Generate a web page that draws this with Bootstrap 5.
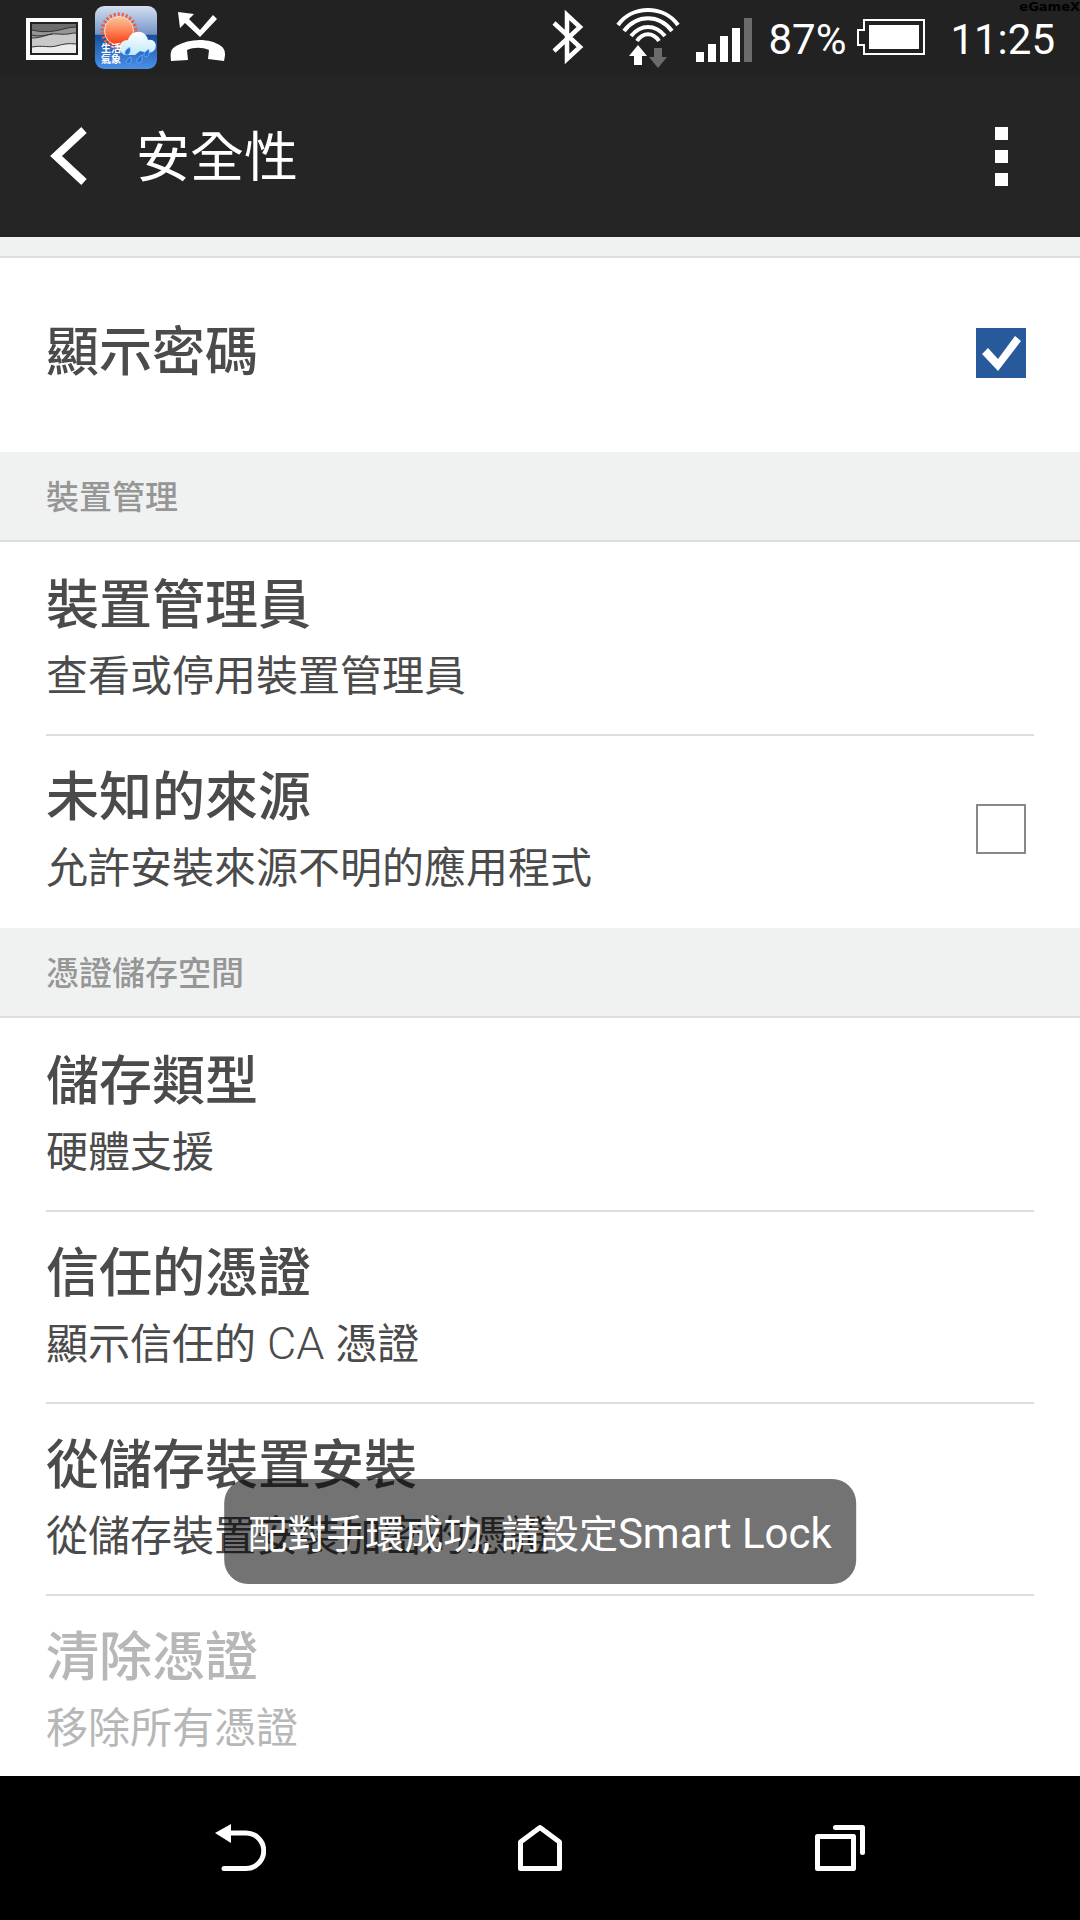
<!DOCTYPE html>
<html lang="zh-Hant">
<head>
<meta charset="utf-8">
<meta name="viewport" content="width=device-width, initial-scale=1">
<title>安全性</title>
<link href="https://cdn.jsdelivr.net/npm/bootstrap@5.3.0/dist/css/bootstrap.min.css" rel="stylesheet">
<style>
body{font-family:Roboto,"Noto Sans CJK TC",sans-serif;color:#4b4b4b}
.status-bar{height:75px;background:#222;font-size:42px;line-height:50px;padding:0 25px}
.status-text{padding-top:4px}
.watermark{top:0;right:0;font:bold 13px/14px "DejaVu Sans",sans-serif;color:#000}
.app-bar{height:162px;background:#252525;padding:0 46px}
.app-title{font-size:54px;line-height:80px;font-weight:400;padding-top:6px;margin-left:46px}
.icon-btn{background:none;border:0;padding:0;line-height:0;color:#fff}
.strip{height:21px;background:#f0f2f1;border-bottom:2px solid #ddd}
.group-title{height:90px;background:#f0f2f1;border-bottom:2px solid #ddd;color:#969696;font-size:33px;line-height:84px;font-weight:500;padding:4px 46px 0}
.settings{padding:0 46px 2px}
.settings .list-group-item{border:0;border-top:2px solid #ddd;padding:22px 0 26px;min-height:192px;color:inherit;background:none}
.settings .list-group-item:first-child{border-top-color:transparent}
.item-title{font-size:53px;line-height:80px;font-weight:500}
.item-note{font-size:42px;line-height:62px}
.latin{font-size:45px;line-height:40px;font-weight:300}
.settings .list-group-item.off{color:#b7b7b7}
.settings .form-check-input{width:50px;height:50px;margin:0 8px 0 0;border:2px solid #888;border-radius:0;flex:none}
.settings .form-check-input:checked{border-color:#265a9a;background-color:#265a9a;background-size:50px 50px;background-position:center;background-image:url("data:image/svg+xml,%3csvg xmlns='http://www.w3.org/2000/svg' viewBox='0 0 50 50'%3e%3cpath fill='%23fff' d='M6 26L12 20L22 31L39 8L45 13L22 43Z'/%3e%3c/svg%3e")}
.toast-note{bottom:192px;background:rgba(0,0,0,.55);border-radius:24px;padding:24px 24px 18px;font-size:39px;line-height:61px}
.toast-note span{font-size:42px}
.nav-keys{height:144px}
</style>
<script src="https://cdn.jsdelivr.net/npm/bootstrap@5.3.0/dist/js/bootstrap.bundle.min.js"></script>
</head>
<body class="vh-100 d-flex flex-column overflow-hidden bg-white">
<header class="flex-shrink-0">
  <div class="status-bar position-relative d-flex align-items-center text-white">
    <span class="watermark position-absolute">eGameX</span>
    <svg width="58" height="75" viewBox="25 0 58 75" aria-hidden="true"><path fill="#fff" d="M26 18h56v42H26z"/><path fill="#222" d="M30 22h48v33H30z"/><path fill="#6d6d6d" d="M32 24h44v29H32z"/><path fill="#969696" d="M32 30c8 2 14 2 22 1s14-4 22-4v26H32z"/><path fill="#c9c9c9" d="M32 38c12 0 15-5 26-4s12-1 18-1v20H32z"/><path fill="#ececec" d="M32 47c12-2 16 1 24-1s12-3 20-2v9H32z"/><path fill="none" stroke="#333" d="M32 30c8 2 14 2 22 1s14-4 22-4M32 38c12 0 15-5 26-4s12-1 18-1M32 47c12-2 16 1 24-1s12-3 20-2M32 35c8 2 14 0 20-1"/></svg>
    <svg class="ms-2" width="70" height="75" viewBox="91 0 70 75" aria-hidden="true"><defs><linearGradient id="sky" x2="0" y2="1"><stop offset="0" stop-color="#d4dff0"/><stop offset=".45" stop-color="#7395c7"/><stop offset=".46" stop-color="#154f9d"/><stop offset="1" stop-color="#4a91e8"/></linearGradient><linearGradient id="sun" x2="0" y2="1"><stop offset="0" stop-color="#f9c6a0"/><stop offset=".5" stop-color="#ff8155"/><stop offset="1" stop-color="#f73613"/></linearGradient><linearGradient id="cloud" x2="0" y2="1"><stop offset="0" stop-color="#fff"/><stop offset="1" stop-color="#bfe8fb"/></linearGradient></defs><rect x="95" y="6" width="62" height="63" rx="9" fill="url(#sky)"/><circle cx="119" cy="31" r="16.500" fill="none" stroke="#f15a3c" stroke-width="4" stroke-dasharray="2 2"/><circle cx="119" cy="31" r="14.500" fill="url(#sun)" stroke="#ffe0c0"/><path fill="url(#cloud)" d="M125 55c-8-3-7-15 3-15 3-11 18-11 20 0 10-2 11 13 0 13l-8-2-5 4z"/><path fill="#2872d8" stroke="#8fc3ff" stroke-width=".6" d="M130 47c-9 5-4 10-1 7 2-2 1-5 1-7zM149 49c-9 5-4 10-1 7 2-2 1-5 1-7zM142 55c-9 5-4 10-1 7 2-2 1-5 1-7zM131 57c-8 4-4 9-1 6 2-2 1-4 1-6z"/><text x="101" y="52" font-size="10" font-weight="700" fill="#fff">生活</text><text x="101" y="63" font-size="10" font-weight="700" fill="#fff">氣象</text></svg>
    <svg class="ms-2" width="56" height="75" viewBox="169 0 56 75" aria-hidden="true"><path fill="#fff" d="M178 12l16 2-5 5 11 11 13-15 4 4-17 18-15-14-5 5zM171 61c-1-9 0-12 5-15 14-8 34-8 45 0 4 3 5 7 3 15l-16-2 1-9c-7-3-15-3-22 0l1 10z"/></svg>
    <div class="d-flex align-items-center ms-auto">
      <svg width="200" height="75" viewBox="552 0 200 75" aria-hidden="true"><path fill="none" stroke="#fff" stroke-width="4.500" d="M554 23l26 24-13 12V15l13 12-26 24"/><g fill="none" stroke="#fff" stroke-width="4"><path d="M618 25C632 5 664 5 678 25M624 31C637 14 659 14 672 31M631 36C641 24 655 24 665 36M637 41C643 32 653 32 659 41"/></g><path fill="#fff" d="M638 45l9 11h-5v9h-8v-9h-5zM696 52h8v10h-8zM708 44h8v18h-8zM720 36h8v26h-8zM732 28h8v34h-8z"/><path fill="#6b6b6b" d="M654 48h8v9h5l-9 11-9-11h5zM744 18h8v44h-8z"/></svg>
      <span class="status-text ms-3">87%</span>
      <svg class="ms-2" width="72" height="75" viewBox="854 0 72 75" aria-hidden="true"><path fill="none" stroke="#fff" stroke-width="2" d="M864 20h60v34h-60v-9h-6V30h6z"/><path fill="#fff" d="M869 25h50v24h-50z"/></svg>
      <time class="status-text ms-4">11:25</time>
    </div>
  </div>
  <div class="app-bar d-flex align-items-center text-white">
    <button class="icon-btn" type="button" aria-label="返回"><svg width="44" height="60" viewBox="0 0 44 60"><path fill="none" stroke="#fff" stroke-width="8" d="M38 4L10 30l28 26"/></svg></button>
    <h1 class="app-title mb-0">安全性</h1>
    <button class="icon-btn ms-auto" type="button" aria-label="更多選項"><svg width="64" height="60" viewBox="0 0 64 60"><path fill="#fff" d="M25 1h13v13H25zM25 24h13v13H25zM25 47h13v13H25z"/></svg></button>
  </div>
</header>
<main class="flex-grow-1 overflow-hidden position-relative">
  <div class="strip"></div>
  <ul class="settings list-group list-group-flush">
    <li class="list-group-item d-flex align-items-center">
      <label class="item-title flex-grow-1" for="show-pw">顯示密碼</label>
      <input class="form-check-input" type="checkbox" id="show-pw" checked>
    </li>
  </ul>
  <h2 class="group-title mb-0">裝置管理</h2>
  <ul class="settings list-group list-group-flush">
    <li class="list-group-item"><div class="item-title">裝置管理員</div><div class="item-note">查看或停用裝置管理員</div></li>
    <li class="list-group-item d-flex align-items-center">
      <label class="flex-grow-1" for="unknown"><span class="item-title d-block">未知的來源</span><span class="item-note d-block">允許安裝來源不明的應用程式</span></label>
      <input class="form-check-input" type="checkbox" id="unknown">
    </li>
  </ul>
  <h2 class="group-title mb-0">憑證儲存空間</h2>
  <ul class="settings list-group list-group-flush">
    <li class="list-group-item"><div class="item-title">儲存類型</div><div class="item-note">硬體支援</div></li>
    <li class="list-group-item"><div class="item-title">信任的憑證</div><div class="item-note">顯示信任的<span class="latin"> CA </span>憑證</div></li>
    <li class="list-group-item"><div class="item-title">從儲存裝置安裝</div><div class="item-note">從儲存裝置安裝加密的憑證</div></li>
    <li class="list-group-item off"><div class="item-title">清除憑證</div><div class="item-note">移除所有憑證</div></li>
  </ul>
  <div class="toast-note position-absolute start-50 translate-middle-x text-white text-nowrap" role="status">配對手環成功<span>, </span>請設定<span>Smart Lock</span></div>
</main>
<nav class="nav-keys flex-shrink-0 bg-black" aria-label="系統導覽">
  <div class="row g-0 col-10 mx-auto h-100">
    <button class="icon-btn col-4" type="button" aria-label="上一頁"><svg width="52" height="50" viewBox="214 1823 52 50"><path fill="#fff" d="M215 1833l16-9v19z"/><path fill="none" stroke="#fff" stroke-width="5" stroke-linecap="round" d="M230 1833h16a17.500 17.500 0 0 1 0 35.500h-22"/></svg></button>
    <button class="icon-btn col-4" type="button" aria-label="首頁"><svg width="52" height="50" viewBox="514 1823 52 50"><path fill="none" stroke="#fff" stroke-width="5" stroke-linejoin="round" d="M520.500 1868.500h39V1842L540 1827.500 520.500 1842z"/></svg></button>
    <button class="icon-btn col-4" type="button" aria-label="最近使用"><svg width="52" height="50" viewBox="814 1823 52 50"><path fill="none" stroke="#fff" stroke-width="5" stroke-linejoin="round" stroke-linecap="round" d="M817.500 1836.500h36v32h-36zM835.500 1827.500h27v25"/></svg></button>
  </div>
</nav>
</body>
</html>
